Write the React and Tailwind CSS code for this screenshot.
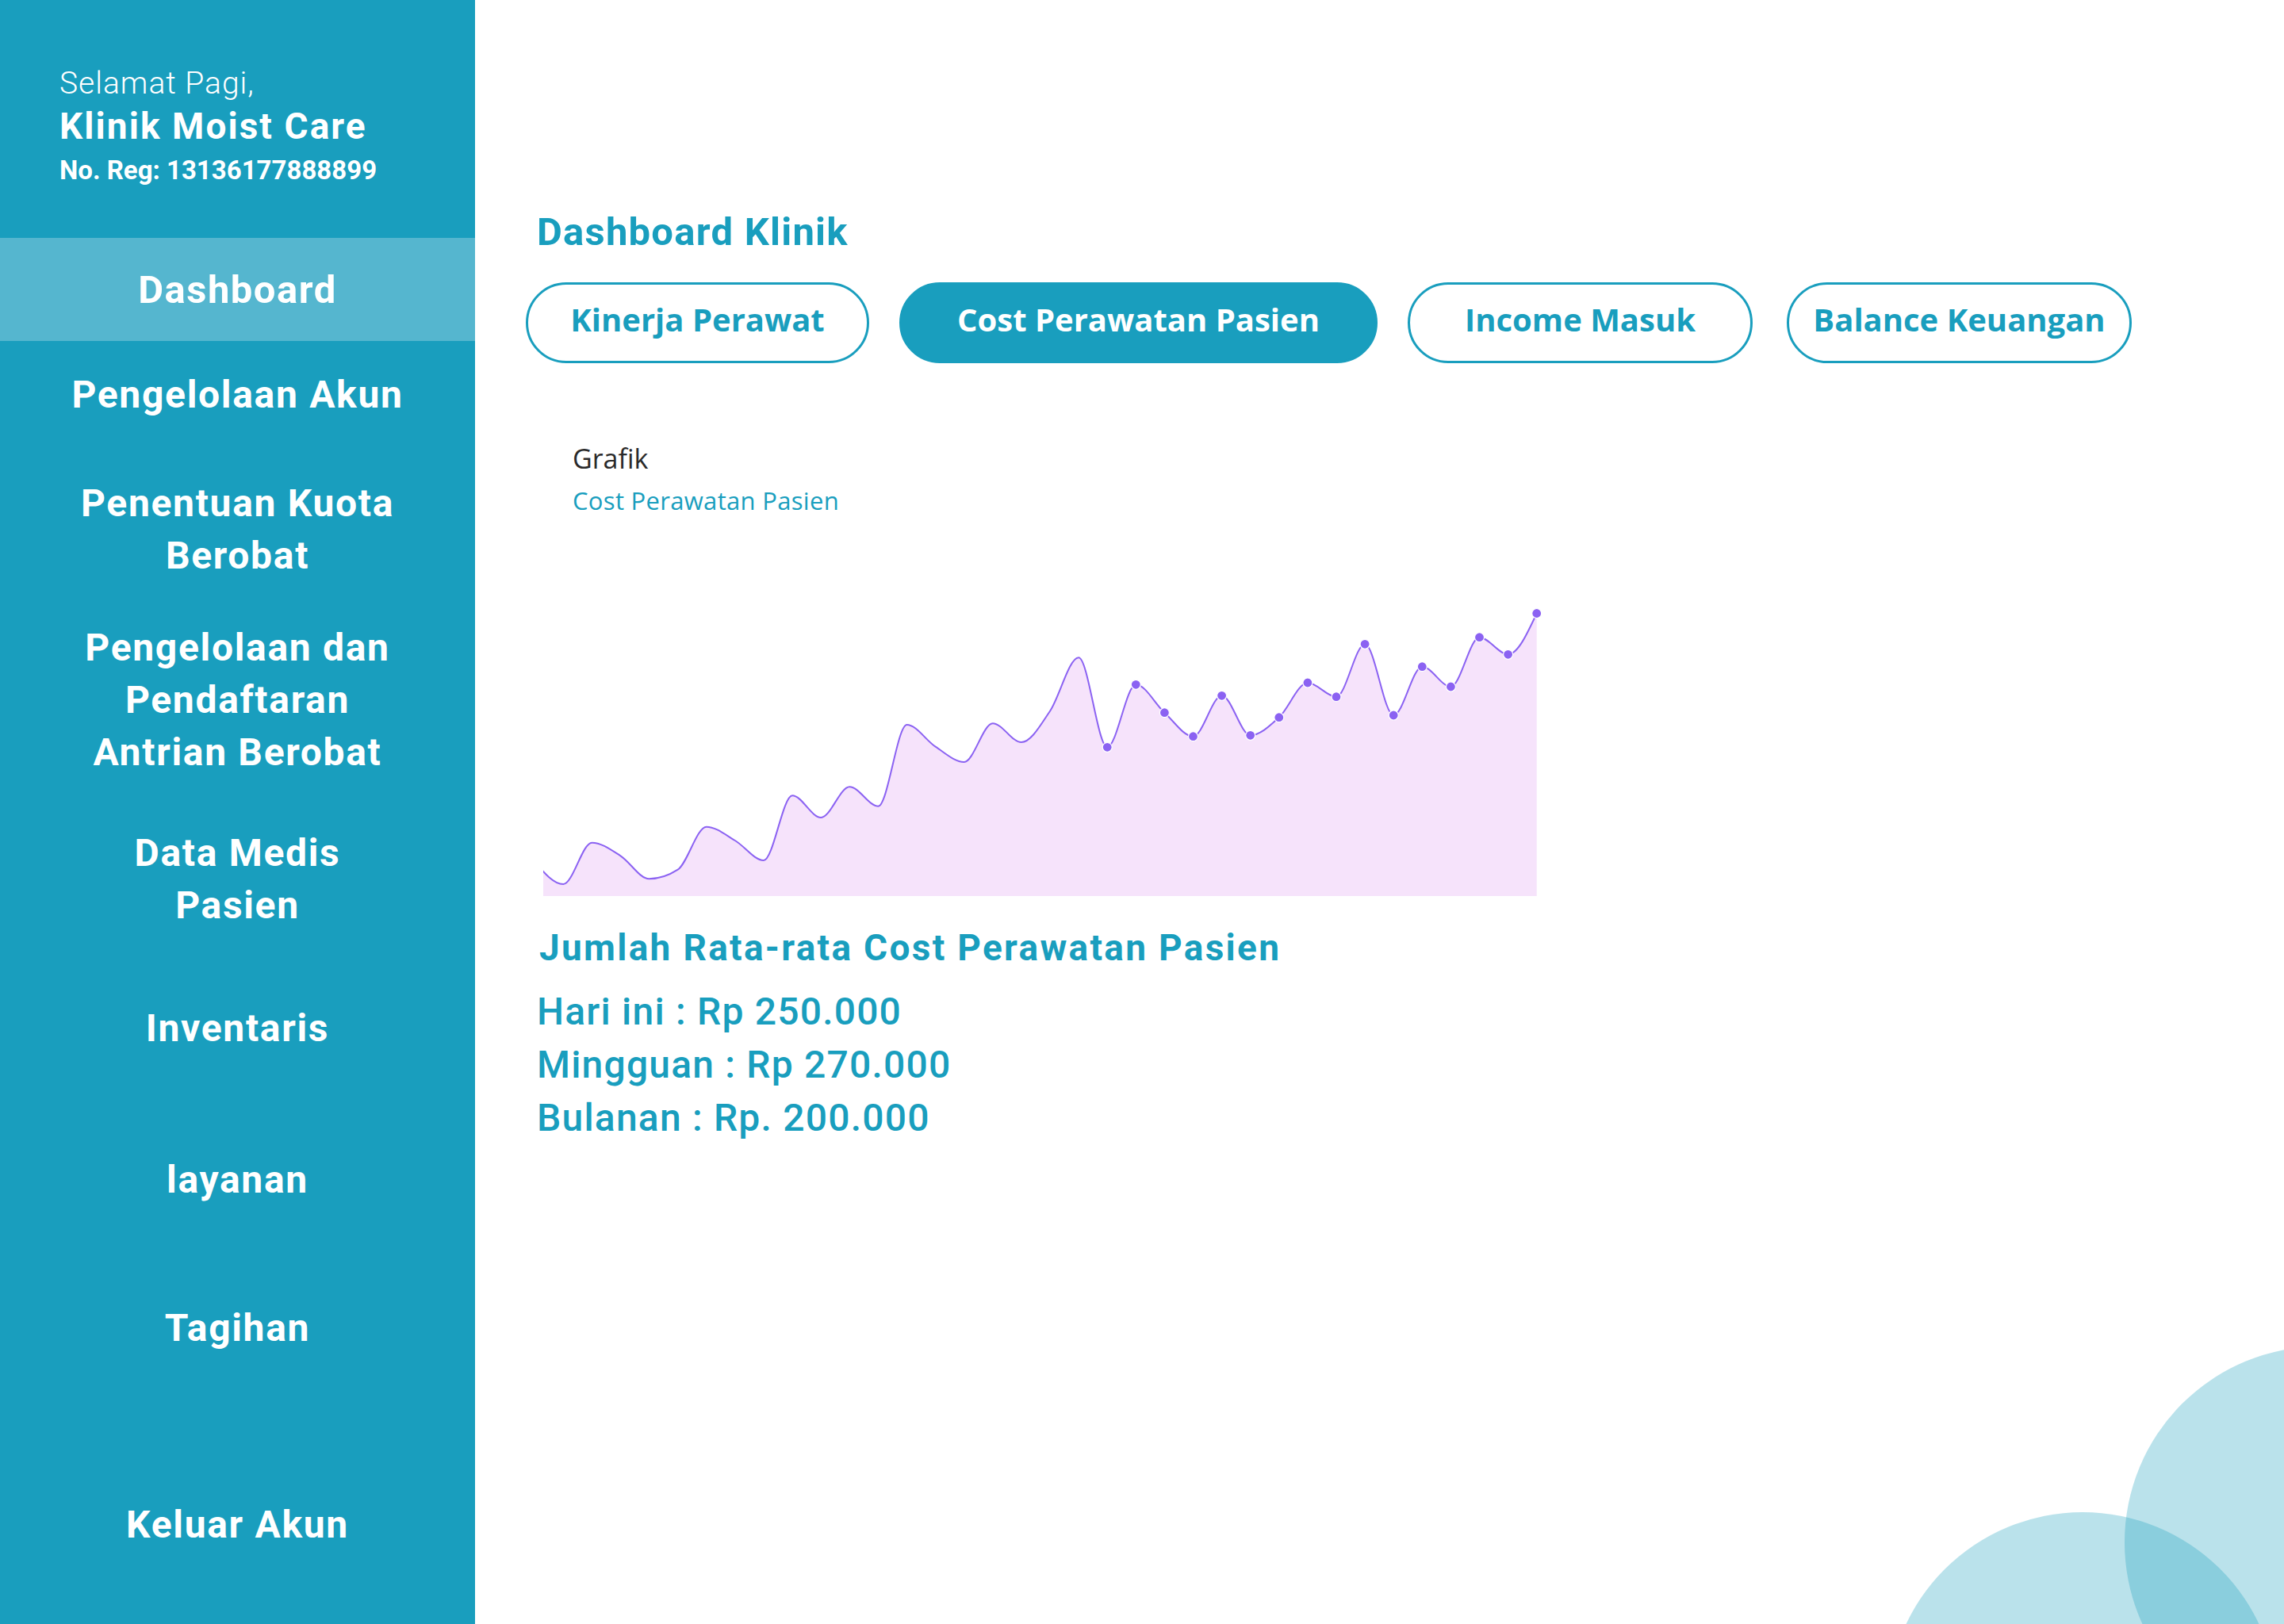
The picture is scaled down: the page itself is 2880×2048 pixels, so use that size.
import React from 'react';

const menu = [
    { lines: ['Pengelolaan Akun'], gap: 'mt-[35px]' },
    { lines: ['Penentuan Kuota', 'Berobat'], gap: 'mt-[71px]' },
    { lines: ['Pengelolaan dan', 'Pendaftaran', 'Antrian Berobat'], gap: 'mt-[50px]' },
    { lines: ['Data Medis', 'Pasien'], gap: 'mt-[61px]' },
    { lines: ['Inventaris'], gap: 'mt-[89px]' },
    { lines: ['layanan'], gap: 'mt-[125px]' },
    { lines: ['Tagihan'], gap: 'mt-[121px]' },
    { lines: ['Keluar Akun'], gap: 'mt-[182px]' },
];

const tabs = [
    { label: 'Kinerja Perawat', width: 'w-[433px]' },
    { label: 'Cost Perawatan Pasien', width: 'w-[603px]', active: true },
    { label: 'Income Masuk', width: 'w-[435px]' },
    { label: 'Balance Keuangan', width: 'w-[435px] ml-[5px]' },
];

// cost values, screen y of each point
const costs = [
    1086.7, 1115, 1062.7, 1079.3, 1108.3, 1096.7, 1042.7, 1060, 1085, 1003.3, 1031, 992.3,
    1016.7, 914, 941.7, 961, 912.3, 936, 896.7, 829.3, 942.3, 863.3, 898.7, 928.7, 877.3,
    927.3, 904.7, 861, 878.7, 812.3, 902, 840.7, 866, 803.7, 825.3, 773.5,
];

const CHART_H = 370;
const points = costs.map((y, i) => ({ x: -10.8 + i * 36.1, y: y - 760 }));

// monotone-x interpolation, same as d3.curveMonotoneX
function monotonePath(pts) {
    const sign = (v) => (v < 0 ? -1 : 1);
    const n = pts.length;
    const t = new Array(n).fill(0);
    for (let i = 1; i < n - 1; i++) {
        const h0 = pts[i].x - pts[i - 1].x;
        const h1 = pts[i + 1].x - pts[i].x;
        const s0 = (pts[i].y - pts[i - 1].y) / h0;
        const s1 = (pts[i + 1].y - pts[i].y) / h1;
        const p = (s0 * h1 + s1 * h0) / (h0 + h1);
        t[i] = (sign(s0) + sign(s1)) * Math.min(Math.abs(s0), Math.abs(s1), 0.5 * Math.abs(p)) || 0;
    }
    const first = (pts[1].y - pts[0].y) / (pts[1].x - pts[0].x);
    const last = (pts[n - 1].y - pts[n - 2].y) / (pts[n - 1].x - pts[n - 2].x);
    t[0] = (3 * first - t[1]) / 2;
    t[n - 1] = (3 * last - t[n - 2]) / 2;

    let d = `M${pts[0].x},${pts[0].y}`;
    for (let i = 0; i < n - 1; i++) {
        const dx = (pts[i + 1].x - pts[i].x) / 3;
        d += ` C${pts[i].x + dx},${pts[i].y + dx * t[i]} ${pts[i + 1].x - dx},${pts[i + 1].y - dx * t[i + 1]} ${pts[i + 1].x},${pts[i + 1].y}`;
    }
    return d;
}

function CostChart() {
    const line = monotonePath(points);
    const lastX = points[points.length - 1].x;
    const area = `${line} L${lastX},${CHART_H} L${points[0].x},${CHART_H} Z`;

    return (
        <svg width="1262" height="375" viewBox="0 0 1262 375" className="block">
            <path d={area} fill="#f6e3fb" />
            <path d={line} fill="none" stroke="#8b62f2" strokeWidth="2" />
            {points.slice(20).map((p, i) => (
                <circle key={i} cx={p.x} cy={p.y} r="6" fill="#8b62f2" stroke="#ffffff" strokeWidth="1.2" />
            ))}
        </svg>
    );
}

export default function App() {
    return (
        <div className="flex w-full h-[2048px] bg-white font-['Roboto',_sans-serif]">
            {/* Sidebar */}
            <aside className="w-[599px] shrink-0 bg-[#199ebe] text-white flex flex-col">
                <div className="pl-[75px] pt-[78px]">
                    <p className="text-[39px] leading-[55px] font-light tracking-[0.025em]">Selamat Pagi,</p>
                    <p className="text-[46px] leading-[52px] font-bold tracking-[0.045em]">Klinik Moist Care</p>
                    <p className="text-[33px] leading-[60px] font-bold">No. Reg: 13136177888899</p>
                </div>

                <div className="mt-[55px] h-[130px] bg-[#55b6cf] flex items-center justify-center">
                    <span className="text-[49px] font-bold leading-none tracking-[0.03em]">Dashboard</span>
                </div>

                {menu.map((item) => (
                    <div key={item.lines[0]} className={`${item.gap} text-center text-[48px] leading-[66px] font-bold tracking-[0.035em]`}>
                        {item.lines.map((l) => (
                            <div key={l}>{l}</div>
                        ))}
                    </div>
                ))}
            </aside>

            {/* Main */}
            <main className="relative flex-1 overflow-hidden pl-[64px] pt-[269px]">
                <div className="absolute left-[1781px] top-[1907px] w-[492px] h-[492px] rounded-full bg-[#199ebe]/30" />
                <div className="absolute left-[2080px] top-[1698px] w-[494px] h-[494px] rounded-full bg-[#199ebe]/30" />

                <h1 className="ml-[14px] text-[49px] leading-[48px] font-bold tracking-[0.025em] text-[#199ebe]">Dashboard Klinik</h1>

                <div className="mt-[39px] flex gap-[38px] font-['Open_Sans',_sans-serif]">
                    {tabs.map((tab) => (
                        <button
                            key={tab.label}
                            className={`${tab.width} h-[102px] rounded-full border-[3px] border-[#199ebe] text-[40px] font-bold flex items-center justify-center pb-2 ${
                                tab.active ? 'bg-[#199ebe] text-white' : 'bg-white text-[#199ebe]'
                            }`}
                        >
                            {tab.label}
                        </button>
                    ))}
                </div>

                <div className="mt-[100px] ml-[59px] font-['Open_Sans',_sans-serif]">
                    <p className="text-[34px] leading-[40px] text-[#2a2a2a]">Grafik</p>
                    <p className="mt-[13px] text-[31px] leading-[40px] tracking-[0.01em] text-[#199ebe]">Cost Perawatan Pasien</p>
                </div>

                <div className="mt-[109px] ml-[22px]">
                    <CostChart />
                </div>

                <h2 className="mt-[32px] ml-[17px] text-[46px] leading-[56px] font-bold tracking-[0.05em] text-[#199ebe]">
                    Jumlah Rata-rata Cost Perawatan Pasien
                </h2>

                <div className="mt-[19px] ml-[14px] text-[48px] leading-[67px] font-medium tracking-[0.025em] text-[#199ebe]">
                    <p>Hari ini : Rp 250.000</p>
                    <p>Mingguan : Rp 270.000</p>
                    <p>Bulanan : Rp. 200.000</p>
                </div>
            </main>
        </div>
    );
}
